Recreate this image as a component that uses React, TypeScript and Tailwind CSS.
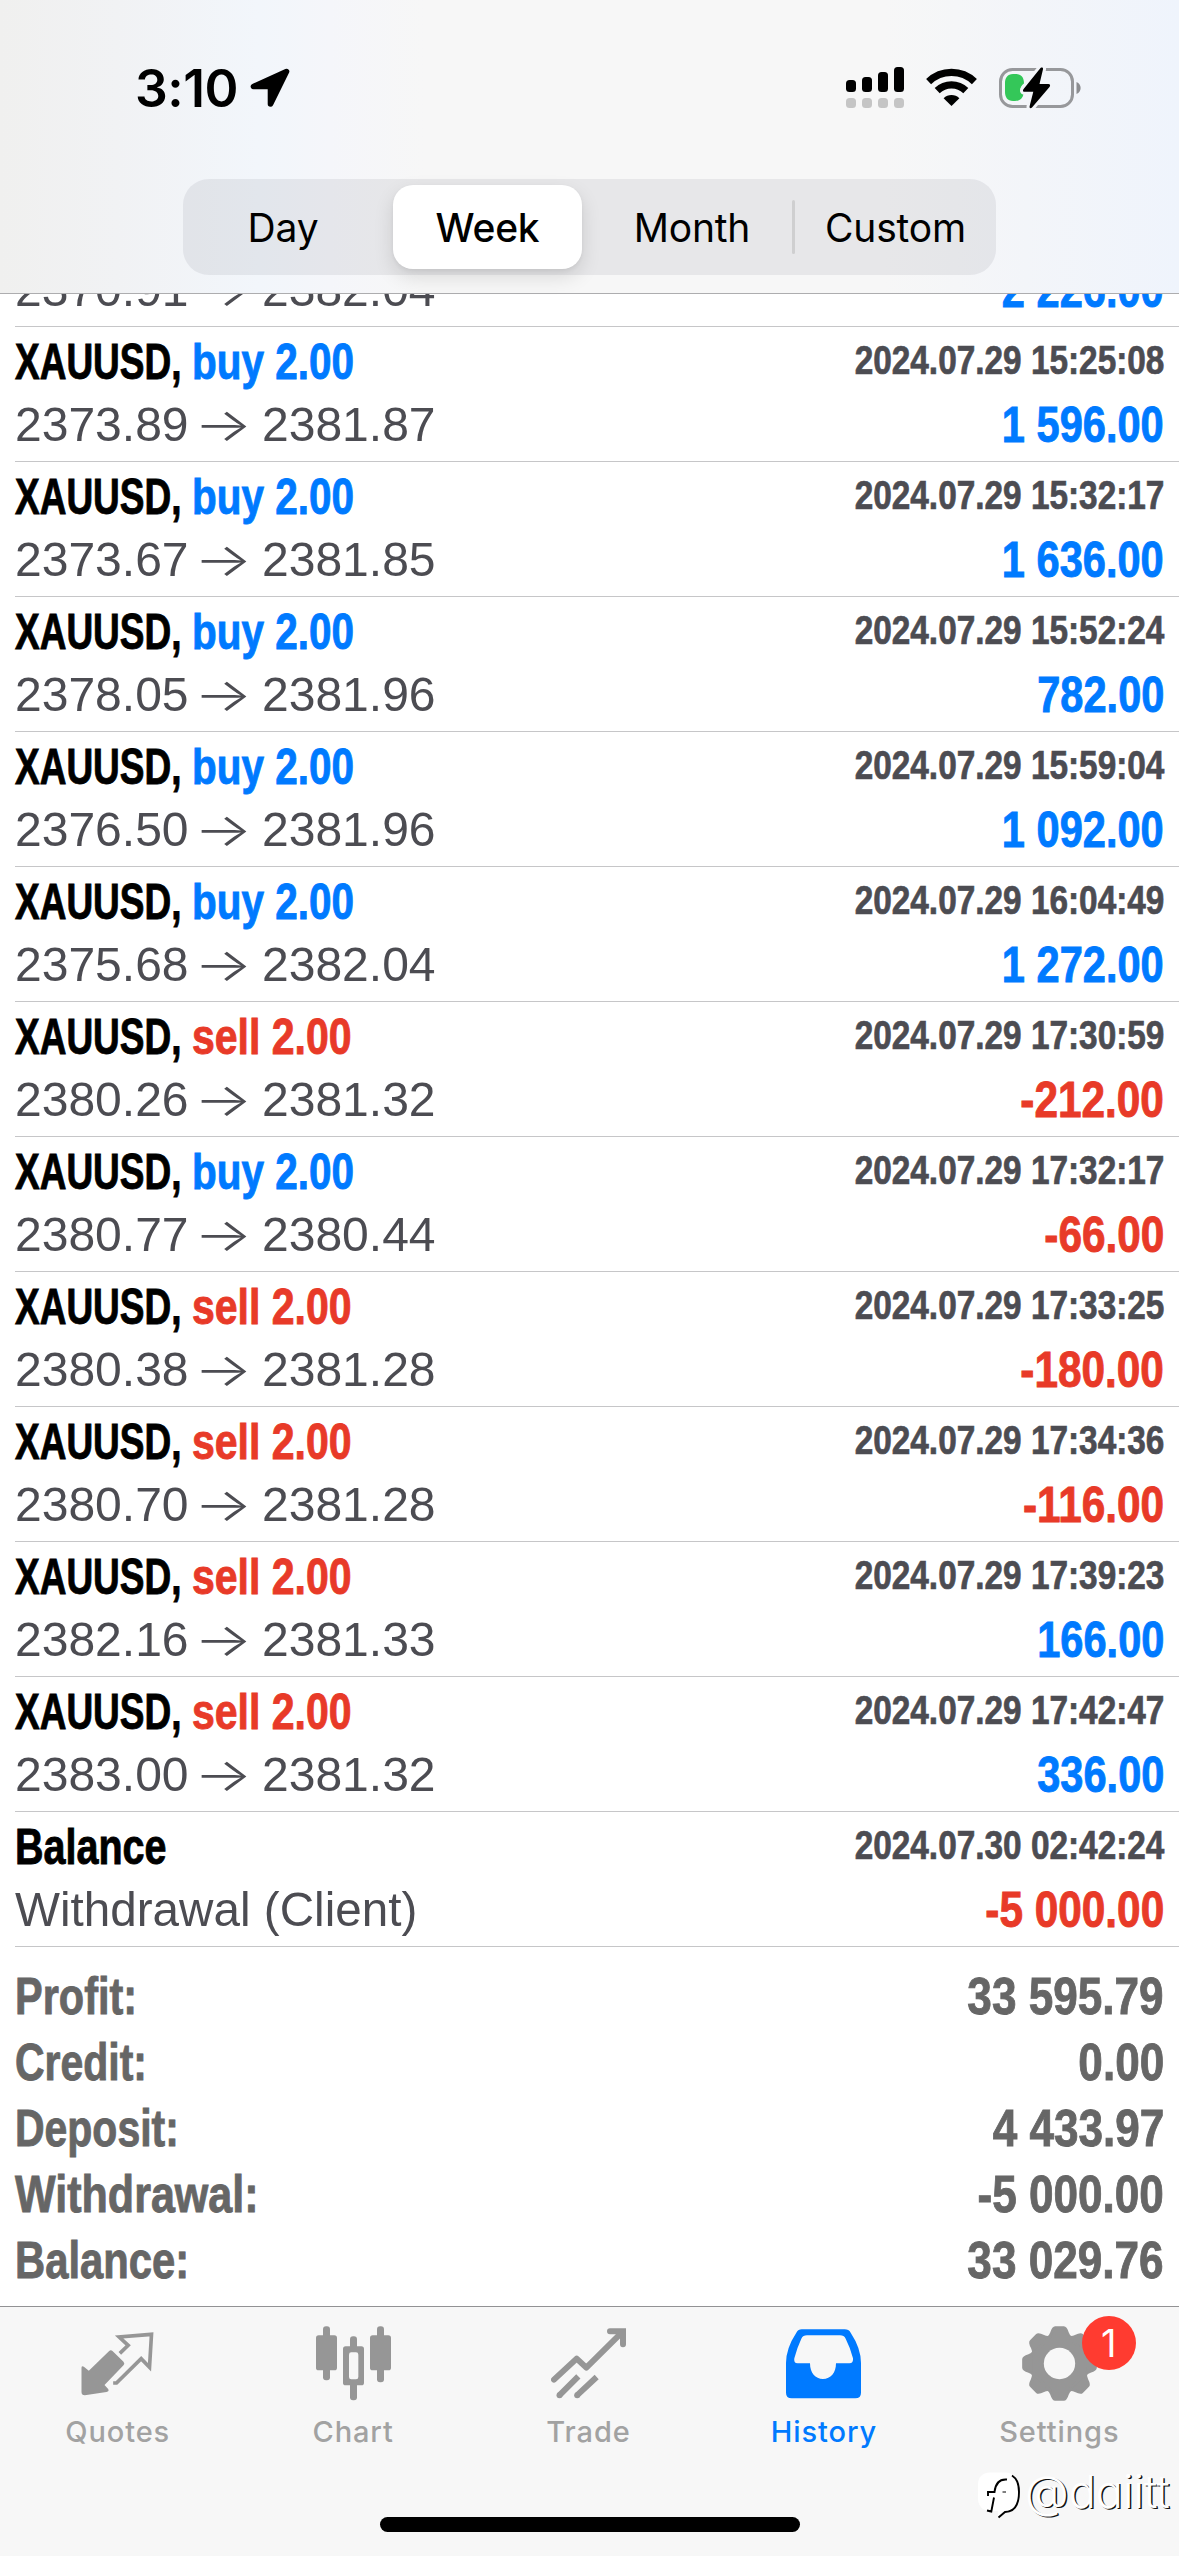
import type { ReactNode } from "react";
import clsx from "clsx";

type Deal = {
  side: "buy" | "sell";
  open: string;
  close: string;
  time: string;
  profit: string;
};

const deals: Deal[] = [
  { side: "buy", open: "2373.89", close: "2381.87", time: "2024.07.29 15:25:08", profit: "1 596.00" },
  { side: "buy", open: "2373.67", close: "2381.85", time: "2024.07.29 15:32:17", profit: "1 636.00" },
  { side: "buy", open: "2378.05", close: "2381.96", time: "2024.07.29 15:52:24", profit: "782.00" },
  { side: "buy", open: "2376.50", close: "2381.96", time: "2024.07.29 15:59:04", profit: "1 092.00" },
  { side: "buy", open: "2375.68", close: "2382.04", time: "2024.07.29 16:04:49", profit: "1 272.00" },
  { side: "sell", open: "2380.26", close: "2381.32", time: "2024.07.29 17:30:59", profit: "-212.00" },
  { side: "buy", open: "2380.77", close: "2380.44", time: "2024.07.29 17:32:17", profit: "-66.00" },
  { side: "sell", open: "2380.38", close: "2381.28", time: "2024.07.29 17:33:25", profit: "-180.00" },
  { side: "sell", open: "2380.70", close: "2381.28", time: "2024.07.29 17:34:36", profit: "-116.00" },
  { side: "sell", open: "2382.16", close: "2381.33", time: "2024.07.29 17:39:23", profit: "166.00" },
  { side: "sell", open: "2383.00", close: "2381.32", time: "2024.07.29 17:42:47", profit: "336.00" },
];

const summary = [
  { label: "Profit:", value: "33 595.79", fit: "scale-x-[0.79]" },
  { label: "Credit:", value: "0.00", fit: "scale-x-[0.78]" },
  { label: "Deposit:", value: "4 433.97", fit: "scale-x-[0.78]" },
  { label: "Withdrawal:", value: "-5 000.00", fit: "scale-x-[0.82]" },
  { label: "Balance:", value: "33 029.76", fit: "scale-x-[0.796]" },
];

function StatusBar() {
  return (
    <div className="flex h-[179px] items-start justify-between pl-[135px] pr-[96px]">
      <div className="flex items-start">
        <span className="w-[115px] pt-[57px] text-[51.5px] leading-[62px] font-semibold tracking-[-0.5px]">
          3:10
        </span>
        <svg className="mt-[68px] h-[40px] w-[40px]" viewBox="0 0 40 40">
          <path
            d="M36.5 3.5 L3.5 18.5 H20.5 V36 Z"
            fill="black"
            stroke="black"
            strokeWidth="5.6"
            strokeLinejoin="round"
          />
        </svg>
      </div>
      <div className="flex items-start pt-[67px]">
        <svg className="h-[42px] w-[58px]" viewBox="0 0 58 42">
          <rect x="0" y="13" width="10" height="12" rx="3.5" />
          <rect x="16" y="10" width="10" height="15" rx="3.5" />
          <rect x="32" y="5" width="10" height="20" rx="3.5" />
          <rect x="48" y="0" width="10" height="25" rx="3.5" />
          <g fill="#c5c5c5">
            <rect x="0" y="31" width="10" height="10" rx="3.5" />
            <rect x="16" y="31" width="10" height="10" rx="3.5" />
            <rect x="32" y="31" width="10" height="10" rx="3.5" />
            <rect x="48" y="31" width="10" height="10" rx="3.5" />
          </g>
        </svg>
        <svg className="ml-[22px] h-[40px] w-[51px]" viewBox="0 0 51 40">
          <g fill="none" stroke="black" strokeWidth="7.2">
            <path d="M2.6 14.6 A33 33 0 0 1 48.4 14.6" />
            <path d="M11.2 23.6 A20.6 20.6 0 0 1 39.8 23.6" />
          </g>
          <path d="M25.5 39 L17.6 31.2 A11.4 11.4 0 0 1 33.4 31.2 Z" />
        </svg>
        <svg className="ml-[22px] h-[43px] w-[84px]" viewBox="0 0 84 43">
          <rect x="1.5" y="2.5" width="72" height="37" rx="12" fill="none" stroke="#97989b" strokeWidth="3" />
          <path d="M77.5 15 C83 17 83 25 77.5 27 Z" fill="#8c8d90" />
          <path
            d="M16 7 C22 7 25 10 25 16.5 C20.5 20 20.5 24 24.5 26.5 C24 31 21 34 16 34 H14 C8.5 34 6 30 6 25 V16 C6 11 8.5 7 14 7 Z"
            fill="#34c759"
          />
          <path
            d="M41.5 1 C43 0 44.3 0.6 44 2.3 L40.5 17 H49.3 C51.3 17 51.6 18.5 50.5 20 L33 40.5 C31.6 42 30.2 41.2 30.6 39.3 L34.3 24.8 H25.7 C23.8 24.8 23.5 23.3 24.6 21.9 Z"
            stroke="#f3f5f9"
            strokeWidth="6"
            paintOrder="stroke"
          />
        </svg>
      </div>
    </div>
  );
}

function PeriodTabs() {
  return (
    <div className="ml-[183px] flex h-[96px] w-[813px] items-center rounded-[26px] bg-[#767680]/12 text-[39px] leading-[48px] tracking-[-0.2px]">
      <div className="w-[200px] pt-[2px] text-center">Day</div>
      <div className="ml-[10px] flex h-[84px] w-[189px] items-center justify-center rounded-[20px] bg-white pt-[2px] font-medium shadow-[0_8px_20px_rgba(0,0,0,0.12),0_2px_4px_rgba(0,0,0,0.05)]">
        Week
      </div>
      <div className="ml-[10px] w-[200px] pt-[2px] text-center">Month</div>
      <div className="h-[54px] w-[3px] rounded-full bg-[#cfcfd0]" />
      <div className="flex-1 pt-[2px] text-center">Custom</div>
    </div>
  );
}

function DetailLine({ detail, amount }: { detail: ReactNode; amount: string }) {
  const negative = amount.startsWith("-");
  return (
    <div className="flex items-start justify-between leading-[60px]">
      <div className="flex text-[49px] text-[#4c4c52]">{detail}</div>
      <span
        className={clsx(
          "origin-right text-[49.5px] leading-[61px] font-bold whitespace-nowrap [-webkit-text-stroke:0.9px]",
          negative ? "scale-x-[0.855] text-[#e83a28]" : "scale-x-[0.84] text-[#007aff]",
        )}
      >
        {amount}
      </span>
    </div>
  );
}

function Row({
  title,
  time,
  detail,
  amount,
}: {
  title: ReactNode;
  time: string;
  detail: ReactNode;
  amount: string;
}) {
  return (
    <div className="ml-[15px] h-[135px] border-b border-[#c6c6c8] pr-[15px]">
      <div className="flex h-[67px] items-start justify-between font-bold [-webkit-text-stroke:0.9px]">
        <div className="flex text-[50px] leading-[70px]">{title}</div>
        <span className="origin-right scale-x-[0.834] text-[40px] leading-[67px] whitespace-nowrap text-[#4c4c52] [-webkit-text-stroke:0.7px]">
          {time}
        </span>
      </div>
      <DetailLine detail={detail} amount={amount} />
    </div>
  );
}

function Prices({ open, close }: { open: string; close: string }) {
  return (
    <>
      <span className="w-[179px] origin-left scale-x-[0.98]">{open}</span>
      <span className="w-[68px] origin-left scale-x-[1.33] font-['Inter',sans-serif] text-[46px] font-light">
        →
      </span>
      <span className="origin-left scale-x-[0.98]">{close}</span>
    </>
  );
}

function DealRow({ deal }: { deal: Deal }) {
  return (
    <Row
      title={
        <>
          <span className="w-[177px] origin-left scale-x-[0.74] whitespace-nowrap">XAUUSD,</span>
          <span
            className={clsx(
              "origin-left whitespace-nowrap",
              deal.side === "buy" ? "scale-x-[0.81] text-[#007aff]" : "scale-x-[0.82] text-[#e83a28]",
            )}
          >
            {deal.side} 2.00
          </span>
        </>
      }
      time={deal.time}
      detail={<Prices open={deal.open} close={deal.close} />}
      amount={deal.profit}
    />
  );
}

function QuotesIcon() {
  return (
    <svg className="size-[75px]" viewBox="241.5 107 225 225">
      <path
        d="M329 182 Q334 178 339 182 L372 214 Q377 220 372 225 L315 284 L326 296 Q330 303 321 305 L256 315 Q246 315 246 305 V232 Q247 225 254 230 L268 241 Z"
        fill="#969696"
      />
      <path
        d="M361 189 L386 165 L359 140 L456 132 L450 231 L425 205 L351 278 H341"
        fill="none"
        stroke="#969696"
        strokeWidth="11"
      />
    </svg>
  );
}

function ChartIcon() {
  return (
    <svg className="size-[75px]" viewBox="948 107 225 225" fill="#969696">
      <rect x="969" y="108" width="21" height="162" rx="9" />
      <rect x="948" y="135" width="63" height="105" rx="8" />
      <rect x="1050" y="138" width="21" height="192" rx="9" />
      <rect x="1029" y="168" width="63" height="117" rx="8" />
      <rect x="1047" y="186" width="28" height="81" rx="7" fill="#f7f7f7" />
      <rect x="1131" y="108" width="21" height="168" rx="9" />
      <rect x="1110" y="135" width="63" height="105" rx="8" />
    </svg>
  );
}

function TradeIcon() {
  return (
    <svg
      className="size-[75px]"
      viewBox="396 107 225 225"
      fill="none"
      stroke="#969696"
      strokeWidth="18"
      strokeLinejoin="round"
    >
      <path d="M405 268 L473 205 L502 232 L608 127" strokeLinecap="round" />
      <path d="M573 123 H612 V162" strokeLinecap="round" strokeLinejoin="miter" />
      <path d="M478 258 L421 315 M533 260 L474 315" />
      <g fill="#969696" stroke="none">
        <circle cx="421.5" cy="315" r="9" />
        <circle cx="474.5" cy="315" r="9" />
      </g>
    </svg>
  );
}

function HistoryIcon() {
  return (
    <svg className="size-[75px]" viewBox="1098 107 225 225">
      <path
        fill="#007aff"
        fillRule="evenodd"
        d="M1145 117 H1274 Q1286 117 1292 127 Q1323 174 1323 218 V307 Q1323 324 1306 324 H1115 Q1098 324 1098 307 V218 Q1098 174 1129 127 Q1135 117 1145 117 Z M1161 135 Q1149 135 1144 145 Q1132 170 1123 204 Q1120 219 1133 219 H1170 C1170 248 1186 266 1209 266 C1232 266 1248 248 1248 219 H1288 Q1301 219 1299 204 Q1290 170 1277 145 Q1272 135 1260 135 Z"
      />
    </svg>
  );
}

function SettingsIcon() {
  return (
    <svg className="size-[75px]" viewBox="-112.5 -112.5 225 225">
      <g fill="#969696" stroke="#969696" strokeLinejoin="round">
        <circle r="84" stroke="none" />
        {[0, 45, 90, 135, 180, 225, 270, 315].map((angle) => (
          <path
            key={angle}
            d="M-36 -76 Q-27 -82 -24 -92 Q-19 -108 -13 -108 H13 Q19 -108 24 -92 Q27 -82 36 -76 Z"
            strokeWidth="8"
            transform={`rotate(${angle})`}
          />
        ))}
      </g>
      <circle r="47" fill="#f7f7f7" />
    </svg>
  );
}

const tabs = [
  { label: "Quotes", icon: <QuotesIcon /> },
  { label: "Chart", icon: <ChartIcon /> },
  { label: "Trade", icon: <TradeIcon /> },
  { label: "History", icon: <HistoryIcon />, active: true },
  { label: "Settings", icon: <SettingsIcon />, badge: 1 },
];

function TabBar() {
  return (
    <div className="relative flex h-[250px] flex-col border-t border-[#929294] bg-[#f7f7f7] font-['Inter',sans-serif]">
      <div className="flex h-[210px] w-[1177px] items-start">
        {tabs.map((tab) => (
          <div key={tab.label} className="relative flex flex-1 flex-col items-center pt-[19px]">
            {tab.icon}
            <span
              className={clsx(
                "mt-[13px] text-[29px] leading-[36px] font-medium tracking-[0.9px]",
                tab.active ? "text-[#007aff]" : "text-[#a2a2a2]",
              )}
            >
              {tab.label}
            </span>
            {tab.badge && (
              <span className="absolute top-[9px] left-[140px] flex size-[54px] items-center justify-center rounded-full bg-[#ff3b30] text-[38px] leading-none text-white">
                {tab.badge}
              </span>
            )}
          </div>
        ))}
      </div>
      <div className="ml-[380px] h-[15px] w-[420px] rounded-full bg-black" />
      <div className="absolute top-[165px] left-[978px] flex items-start text-white">
        <svg className="h-[48px] w-[43px]" viewBox="0 0 43 48">
          <path d="M12 0.500 H27 Q40 1 40 14 V26 Q40 39 27 39 L20 45 V39 H12 Q0 38 0 26 V13 Q0 1 12 0.500 Z" fill="white" />
          <g fill="none" stroke="black" strokeWidth="1.9">
            <path d="M34 3.500 Q41 8 41 20 Q41 39.500 27 40 L20.500 45.500" />
            <path d="M29 7.500 Q18 6.500 16.500 20 H10 V24" />
            <path d="M16 25.500 L13.300 39.500 L9 38.500" />
            <path d="M24.500 20 H28" strokeWidth="1" />
          </g>
        </svg>
        <span className="ml-[4px] text-[45px] leading-[39px] font-light [font-feature-settings:'cv11'] [text-shadow:1.5px_1px_0_#111]">
          @daiitt
        </span>
      </div>
    </div>
  );
}

export default function App() {
  return (
    <div className="flex h-[2556px] w-[1179px] flex-col overflow-hidden bg-white font-['Liberation_Sans',Arial,sans-serif] text-black">
      <header className="h-[294px] shrink-0 border-b border-[#adadaf] bg-[linear-gradient(90deg,#f0f0ef_0%,#f1f2f4_10%,#f2f6fb_22%,#f5f6fa_28%,#f7f7f7_36%,#f7f7f7_75%,#f3f5f9_87%,#eff4fc_100%)] font-['Inter',sans-serif]">
        <StatusBar />
        <PeriodTabs />
      </header>
      <main className="flex-1">
        {/* only the bottom of this row shows under the header */}
        <div className="ml-[15px] flex h-[33px] flex-col justify-end overflow-hidden border-b border-[#c6c6c8] pr-[15px] pb-[6px]">
          <DetailLine detail={<Prices open="2370.91" close="2382.04" />} amount="2 226.00" />
        </div>
        {deals.map((deal) => (
          <DealRow key={deal.time} deal={deal} />
        ))}
        <Row
          title={<span className="origin-left scale-x-[0.79]">Balance</span>}
          time="2024.07.30 02:42:24"
          detail={<span className="origin-left scale-x-[0.972] whitespace-nowrap">Withdrawal (Client)</span>}
          amount="-5 000.00"
        />
        <div className="px-[15px] pt-[16px] text-[52.5px] leading-[66px] font-bold text-[#666666] [-webkit-text-stroke:0.9px]">
          {summary.map(({ label, value, fit }) => (
            <div key={label} className="flex justify-between">
              <span className={clsx("origin-left", fit)}>{label}</span>
              <span className="origin-right scale-x-[0.84]">{value}</span>
            </div>
          ))}
        </div>
      </main>
      <TabBar />
    </div>
  );
}
